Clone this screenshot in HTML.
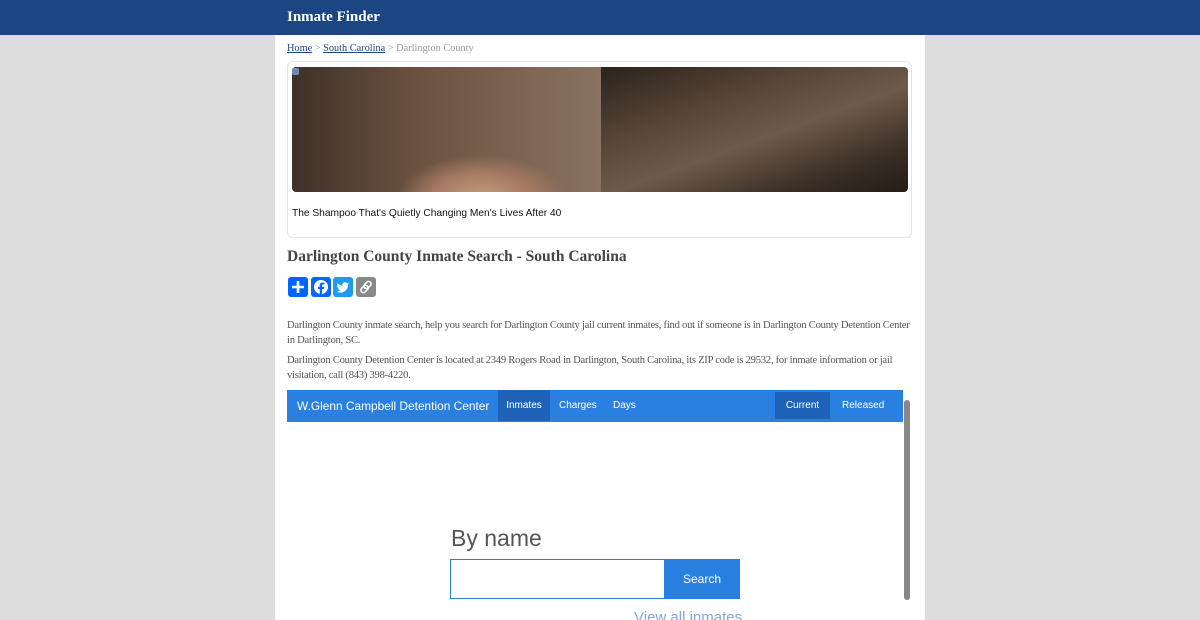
<!DOCTYPE html>
<html><head><style>
*{margin:0;padding:0;box-sizing:border-box}
html,body{width:1200px;height:620px;overflow:hidden}
body{background:#dddddd;font-family:"Liberation Serif",serif;position:relative}
.hdr{position:absolute;left:0;top:0;width:1200px;height:35px;background:#1c4584}
.hdr span{position:absolute;left:287px;top:9px;color:#fff;font-weight:bold;font-size:15px}
.col{position:absolute;left:275px;top:35px;width:650px;height:585px;background:#fff}
.bc{position:absolute;left:287px;top:43px;font-size:10.3px;color:#999}
.bc a{color:#1c4584;text-decoration:underline}
.ad{position:absolute;left:287px;top:61px;width:625px;height:177px;border:1px solid #e5e5e5;border-radius:6px}
.im1{position:absolute;left:292px;top:67px;width:309px;height:125px;border-radius:4px 0 0 4px;background:radial-gradient(ellipse 120px 60px at 190px 130px,#c49a80 0,#a67a62 40%,transparent 70%),linear-gradient(90deg,#3e3128,#6b5140 40%,#7b6250 70%,#8a7262)}
.im2{position:absolute;left:601px;top:67px;width:307px;height:125px;border-radius:0 4px 4px 0;background:linear-gradient(160deg,#2b231d,#5a4738 35%,#6e5a4a 55%,#3c3027 80%,#241c16)}
.adt{position:absolute;left:292px;top:208px;font-family:"Liberation Sans",sans-serif;font-size:10.2px;color:#111}
h1{position:absolute;left:287px;top:248px;font-size:15.5px;color:#444;font-weight:bold}
.sh{position:absolute;top:277px;width:20px;height:20px;border-radius:3px}
p{position:absolute;left:287px;white-space:nowrap;font-size:10.6px;letter-spacing:-0.25px;line-height:15px;color:#555}
.nav{position:absolute;left:287px;top:390px;width:616px;height:32px;background:#2a80e0;font-family:"Liberation Sans",sans-serif;color:#fff}
.nav span{position:absolute;top:1px;height:30px;line-height:30px;font-size:10px}
.sb{position:absolute;left:904px;top:400px;width:6px;height:200px;background:#888;border-radius:3px}
.by{position:absolute;left:451px;top:525px;font-family:"Liberation Sans",sans-serif;font-size:23px;color:#555}
.in{position:absolute;left:450px;top:559px;width:215px;height:40px;border:1px solid #2a80e0}
.btn{position:absolute;left:664px;top:559px;width:76px;height:40px;background:#2a80e0;color:#fff;font-family:"Liberation Sans",sans-serif;font-size:12px;text-align:center;line-height:40px}
.va{position:absolute;left:634px;top:609px;font-family:"Liberation Sans",sans-serif;font-size:15px;color:#7fa8e0}
</style></head><body>
<div class="hdr"><span>Inmate Finder</span></div>
<div class="col"></div>
<div class="bc"><a>Home</a> &gt; <a>South Carolina</a> &gt; Darlington County</div>
<div class="ad"></div>
<div class="im1"></div><div class="im2"></div>
<div style="position:absolute;left:292px;top:68px;width:7px;height:7px;background:#6a8ab8;border-radius:2px"></div>
<div class="adt">The Shampoo That's Quietly Changing Men's Lives After 40</div>
<h1>Darlington County Inmate Search - South Carolina</h1>
<div class="sh" style="left:288px;background:#0166ff"><svg width="20" height="20"><path d="M10 4v12M4 10h12" stroke="#fff" stroke-width="2.6"/></svg></div>
<div class="sh" style="left:311px;background:#0866ff"><svg width="20" height="20"><circle cx="10" cy="10" r="7" fill="#fff"/><path d="M11 18v-6h2l.4-2.2H11V8.5c0-.7.3-1 1-1h1.4V5.6h-2c-2 0-2.6 1.2-2.6 2.7v1.5H7V12h1.8v6z" fill="#0866ff"/></svg></div>
<div class="sh" style="left:333px;background:#1d9bf0"><svg width="20" height="20"><path d="M16 6.5c-.5.2-1 .4-1.5.4.6-.3 1-.8 1.2-1.4-.5.3-1.1.5-1.7.7a2.6 2.6 0 0 0-4.5 2.4C7.3 8.5 5.6 7.5 4.5 6.1c-.6 1-.3 2.4.8 3.1-.4 0-.8-.1-1.2-.3 0 1.2.9 2.3 2.1 2.6-.4.1-.8.1-1.2 0 .3 1 1.3 1.8 2.4 1.8A5.3 5.3 0 0 1 3.5 14.4 7.4 7.4 0 0 0 14.9 7.8c.5-.4.8-.8 1.1-1.3z" fill="#fff"/></svg></div>
<div class="sh" style="left:356px;background:#888"><svg width="20" height="20"><g fill="none" stroke="#fff" stroke-width="1.6"><rect x="9" y="4" width="5" height="8" rx="2.5" transform="rotate(45 11.5 8)"/><rect x="6" y="8" width="5" height="8" rx="2.5" transform="rotate(45 8.5 12)"/></g></svg></div>
<p style="top:318px">Darlington County inmate search, help you search for Darlington County jail current inmates, find out if someone is in Darlington County Detention Center<br>in Darlington, SC.</p>
<p style="top:353px">Darlington County Detention Center is located at 2349 Rogers Road in Darlington, South Carolina, its ZIP code is 29532, for inmate information or jail<br>visitation, call (843) 398-4220.</p>
<div class="nav">
<span style="left:10px;font-size:11.9px">W.Glenn Campbell Detention Center</span>
<span style="left:211px;top:0;height:31px;line-height:32px;width:52px;background:#1f63b8;text-align:center">Inmates</span>
<span style="left:272px">Charges</span>
<span style="left:326px">Days</span>
<span style="left:488px;top:2px;width:55px;height:27px;line-height:28px;background:#1f63b8;text-align:center">Current</span>
<span style="left:555px">Released</span>
</div>
<div class="sb"></div>
<div class="by">By name</div>
<div class="in"></div>
<div class="btn">Search</div>
<div class="va">View all inmates</div>
</body></html>
